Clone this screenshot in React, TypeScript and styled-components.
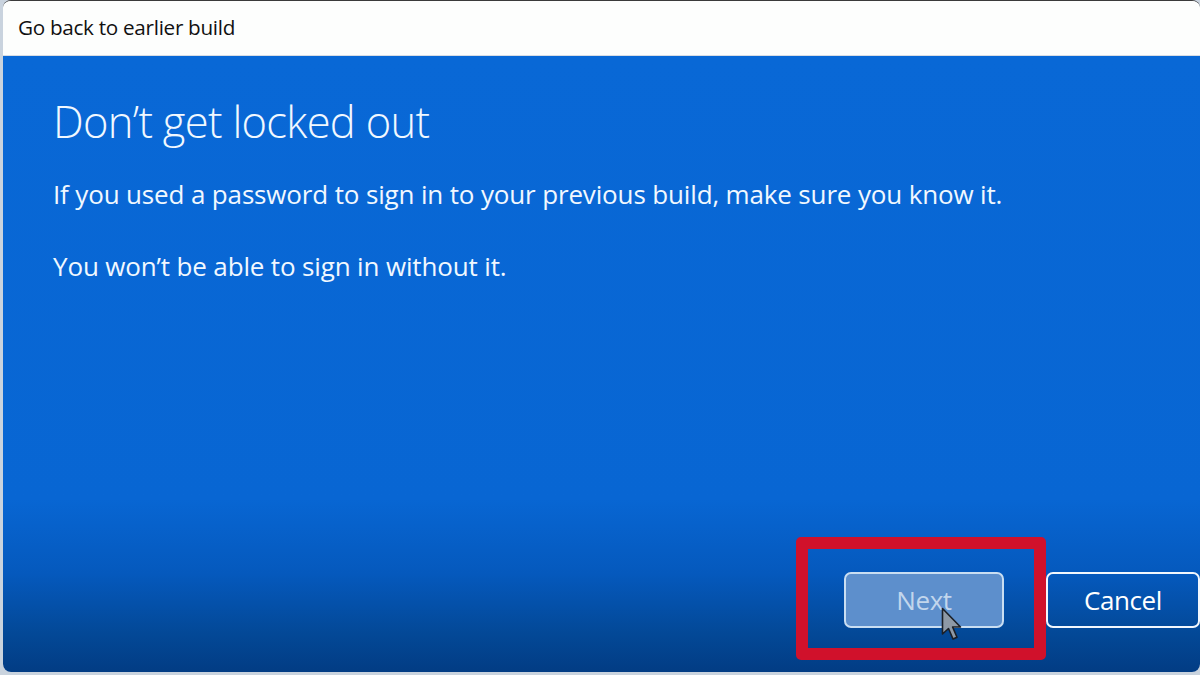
import React from "react";
import styled, { createGlobalStyle } from "styled-components";

const Global = createGlobalStyle`
  html, body { margin: 0; padding: 0; }
  body {
    width: 1200px;
    height: 675px;
    overflow: hidden;
    background: #c9d3de;
    font-family: "Open Sans", "Noto Sans", "Liberation Sans", sans-serif;
  }
`;

const Page = styled.div`
  width: 1200px;
  height: 675px;
  box-sizing: border-box;
  padding: 0 0 3px 3px;
  display: flex;
`;

const Window = styled.div`
  flex: 1;
  display: flex;
  flex-direction: column;
  border-radius: 8px;
  overflow: hidden;
  border-top: 1px solid #3b3b3b;
  background: #ffffff;
`;

const TitleBar = styled.div`
  height: 55px;
  flex: none;
  display: flex;
  align-items: center;
  padding: 0 0 2px 15px;
  box-sizing: border-box;
  background: #fdfefd;
  border-bottom: 1px solid #d8dde4;
`;

const Title = styled.div`
  font-size: 20.7px;
  color: #111;
  letter-spacing: -0.3px;
`;

const Body = styled.div`
  flex: 1;
  display: flex;
  flex-direction: column;
  padding: 37px 0 44px 50px;
  background: linear-gradient(
    to bottom,
    #0968d6 0%,
    #0866d3 72%,
    #0559bd 84%,
    #034896 94%,
    #023c84 100%
  );
  color: #f1f8ff;
`;

const Heading = styled.h1`
  margin: 0;
  font-weight: 340;
  font-size: 43.5px;
  letter-spacing: -0.7px;
  line-height: 58px;
`;

const Para = styled.p<{ $top: number }>`
  margin: 0;
  font-size: 26px;
  font-weight: 500;
  letter-spacing: -0.15px;
  line-height: 32px;
  margin-top: ${(p) => p.$top}px;
`;

const Spacer = styled.div`
  flex: 1;
`;

const Footer = styled.div`
  display: flex;
  justify-content: flex-end;
  align-items: center;
  gap: 42px;
`;

const ButtonWrap = styled.div`
  position: relative;
`;

const Button = styled.button<{ $primary?: boolean }>`
  box-sizing: border-box;
  width: ${(p) => (p.$primary ? 160 : 154)}px;
  height: 56px;
  border-radius: 7px;
  border: 2px solid ${(p) => (p.$primary ? "#c9def2" : "#f2f7fd")};
  background: ${(p) => (p.$primary ? "#5d8fcc" : "transparent")};
  color: ${(p) => (p.$primary ? "#c2d6ec" : "#ffffff")};
  font-family: "Open Sans", "Noto Sans", sans-serif;
  font-size: 26px;
  font-weight: 400;
  letter-spacing: -0.4px;
  padding: 0;
  cursor: default;
`;

const Highlight = styled.div`
  position: absolute;
  top: -35px;
  left: -48px;
  right: -42px;
  bottom: -32px;
  border: 12px solid #d0112b;
  border-radius: 5px;
  pointer-events: none;
`;

const Cursor = styled.svg`
  position: absolute;
  left: 97px;
  top: 35px;
  width: 24px;
  height: 36px;
`;

export default function App() {
  return (
    <>
      <Global />
      <Page>
        <Window>
          <TitleBar>
            <Title>Go back to earlier build</Title>
          </TitleBar>
          <Body>
            <Heading>Don’t get locked out</Heading>
            <Para $top={27}>
              If you used a password to sign in to your previous build, make sure you know it.
            </Para>
            <Para $top={40}>You won’t be able to sign in without it.</Para>
            <Spacer />
            <Footer>
              <ButtonWrap>
                <Button $primary>Next</Button>
                <Highlight />
                <Cursor viewBox="0 0 24 36">
                  <path
                    d="M1.5 1.5 L1.5 27 L7.5 21.5 L12 32 L16 30.2 L11.6 20 L19.5 20 Z"
                    fill="#8e99a6"
                    stroke="#1b1f26"
                    strokeWidth="1.6"
                    strokeLinejoin="round"
                  />
                </Cursor>
              </ButtonWrap>
              <ButtonWrap>
                <Button>Cancel</Button>
              </ButtonWrap>
            </Footer>
          </Body>
        </Window>
      </Page>
    </>
  );
}
